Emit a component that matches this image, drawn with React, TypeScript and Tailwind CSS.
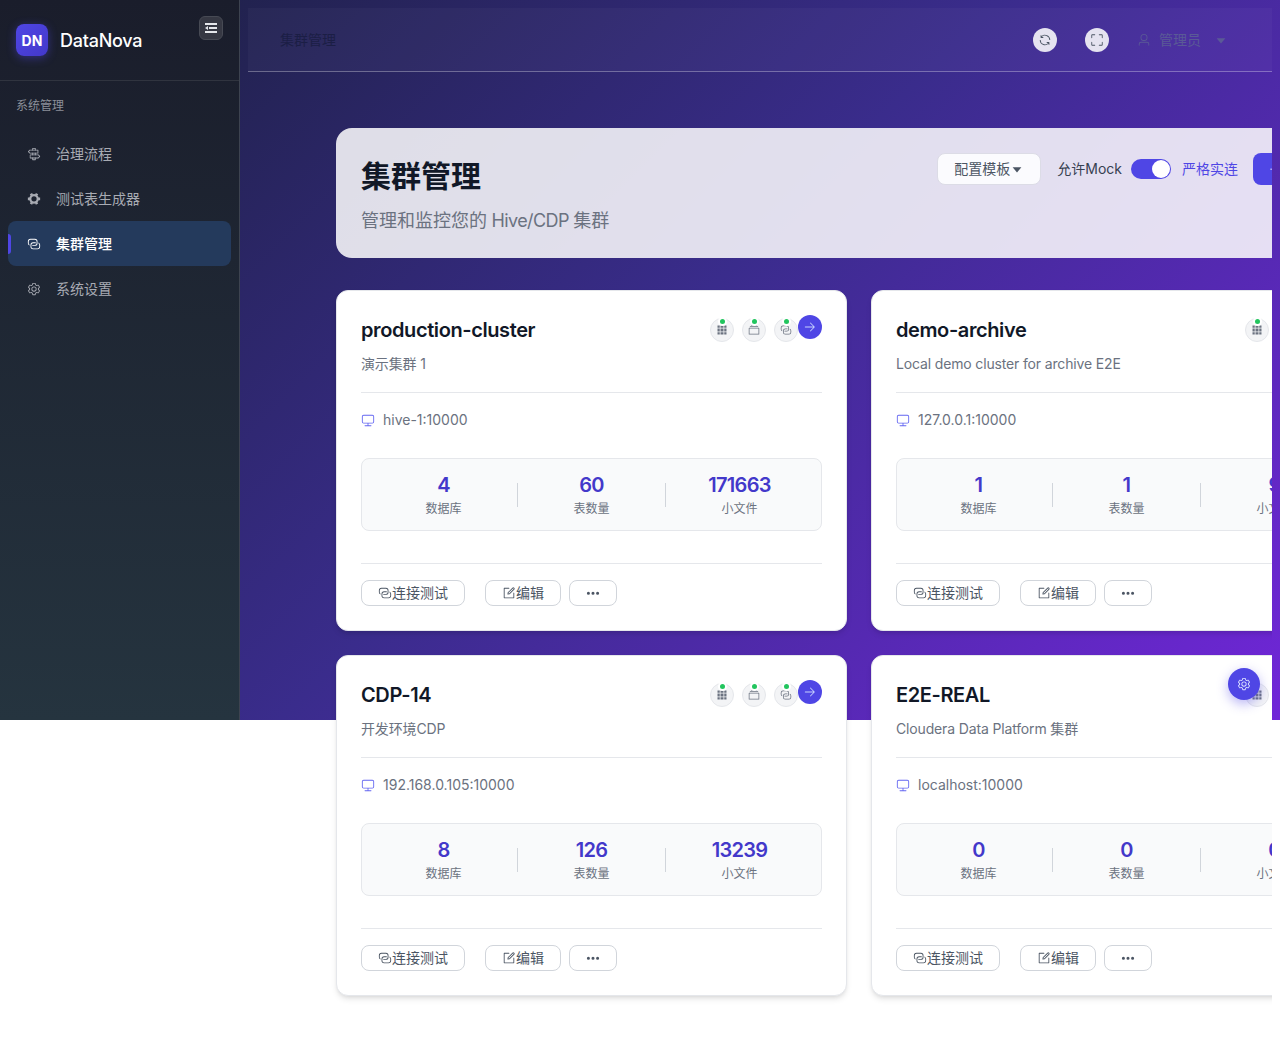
import type { ReactNode } from 'react'

function Icon({ d, className }: { d: string | string[]; className?: string }) {
  const paths = Array.isArray(d) ? d : [d]
  return (
    <svg viewBox="0 0 1024 1024" fill="currentColor" className={className}>
      {paths.map((p, i) => (
        <path key={i} d={p} />
      ))}
    </svg>
  )
}

const icons = {
  connection: [
    'M640 384v64H448a128 128 0 0 0-128 128v128a128 128 0 0 0 128 128h320a128 128 0 0 0 128-128V576a128 128 0 0 0-64-110.848V394.88c74.56 26.368 128 97.472 128 181.056v128a192 192 0 0 1-192 192H448a192 192 0 0 1-192-192V576a192 192 0 0 1 192-192z',
    'M384 640v-64h192a128 128 0 0 0 128-128V320a128 128 0 0 0-128-128H256a128 128 0 0 0-128 128v128a128 128 0 0 0 64 110.848v70.272A192.064 192.064 0 0 1 64 448V320a192 192 0 0 1 192-192h320a192 192 0 0 1 192 192v128a192 192 0 0 1-192 192z',
  ],
  fold: 'M896 192H128v128h768zm0 256H384v128h512zm0 256H128v128h768zM320 384 128 512l192 128z',
  grid: 'M640 384v256H384V384zm64 0h192v256H704zm-64 512H384V704h256zm64 0V704h192v192zm-64-768v192H384V128zm64 0h192v192H704zM320 384v256H128V384zm0 512H128V704h192zm0-768v192H128V128z',
  files: 'M128 384v448h768V384zm-32-64h832a32 32 0 0 1 32 32v512a32 32 0 0 1-32 32H96a32 32 0 0 1-32-32V352a32 32 0 0 1 32-32m64-128h704v64H160zm96-128h512v64H256z',
  monitor: 'M544 768v128h192a32 32 0 1 1 0 64H288a32 32 0 1 1 0-64h192V768H192A128 128 0 0 1 64 640V256a128 128 0 0 1 128-128h640a128 128 0 0 1 128 128v384a128 128 0 0 1-128 128zM192 192a64 64 0 0 0-64 64v384a64 64 0 0 0 64 64h640a64 64 0 0 0 64-64V256a64 64 0 0 0-64-64z',
  setting: 'M600.704 64a32 32 0 0 1 30.464 22.208l35.2 109.376c14.784 7.232 28.928 15.36 42.432 24.512l112.384-24.192a32 32 0 0 1 34.432 15.36L944.32 364.8a32 32 0 0 1-4.032 37.504l-77.12 85.12a357 357 0 0 1 0 49.024l77.12 85.248a32 32 0 0 1 4.032 37.504l-88.704 153.6a32 32 0 0 1-34.432 15.296L708.8 803.904c-13.44 9.088-27.648 17.28-42.368 24.512l-35.264 109.376A32 32 0 0 1 600.704 960H423.296a32 32 0 0 1-30.464-22.208L357.696 828.48a352 352 0 0 1-42.56-24.64l-112.32 24.256a32 32 0 0 1-34.432-15.36L79.68 659.2a32 32 0 0 1 4.032-37.504l77.12-85.248a357 357 0 0 1 0-48.896l-77.12-85.248A32 32 0 0 1 79.68 364.8l88.704-153.6a32 32 0 0 1 34.432-15.296l112.32 24.256c13.568-9.152 27.776-17.408 42.56-24.64l35.2-109.312A32 32 0 0 1 423.232 64H600.64zm-23.424 64H446.72l-36.352 113.088-24.512 11.968a294 294 0 0 0-34.816 20.096l-22.656 15.36-116.224-25.088-65.28 113.152 79.68 88.192-1.92 27.136a293 293 0 0 0 0 40.192l1.92 27.136-79.808 88.192 65.344 113.152 116.224-25.024 22.656 15.296a294 294 0 0 0 34.816 20.096l24.512 11.968L446.72 896h130.688l36.48-113.152 24.448-11.904a288 288 0 0 0 34.752-20.096l22.592-15.296 116.288 25.024 65.28-113.152-79.744-88.192 1.92-27.136a293 293 0 0 0 0-40.256l-1.92-27.136 79.808-88.128-65.344-113.152-116.288 24.96-22.592-15.232a288 288 0 0 0-34.752-20.096l-24.448-11.904L577.344 128zM512 320a192 192 0 1 1 0 384 192 192 0 0 1 0-384m0 64a128 128 0 1 0 0 256 128 128 0 0 0 0-256',
  tools: 'M764.416 254.72a351.7 351.7 0 0 1 86.336 149.184H960v192.064H850.752a351.7 351.7 0 0 1-86.336 149.312l54.72 94.72-166.272 96-54.592-94.72a352.64 352.64 0 0 1-172.48 0L371.136 936l-166.272-96 54.72-94.72a351.7 351.7 0 0 1-86.336-149.312H64v-192h109.248a351.7 351.7 0 0 1 86.336-149.312L204.8 160l166.208-96h.192l54.656 94.592a352.64 352.64 0 0 1 172.48 0L652.8 64h.128L819.2 160l-54.72 94.72zM704 499.968a192 192 0 1 0-384 0 192 192 0 0 0 384 0',
  refresh: 'M771.776 794.88A384 384 0 0 1 128 512h64a320 320 0 0 0 555.712 216.448H654.72a32 32 0 1 1 0-64h149.056a32 32 0 0 1 32 32v148.928a32 32 0 1 1-64 0v-50.56zM276.288 295.616h92.992a32 32 0 0 1 0 64H220.16a32 32 0 0 1-32-32V178.56a32 32 0 0 1 64 0v50.56A384 384 0 0 1 896.128 512h-64a320 320 0 0 0-555.776-216.384z',
  fullScreen: 'M160 96.064l192 .192a32 32 0 0 1 0 64l-192-.192V352a32 32 0 0 1-64 0V160a64 64 0 0 1 64-63.936m704 0a64 64 0 0 1 64 63.936v192a32 32 0 0 1-64 0V160.064l-192 .192a32 32 0 0 1 0-64zM160 927.936a64 64 0 0 1-64-63.936V672a32 32 0 0 1 64 0v192.064l192-.192a32 32 0 0 1 0 64zm704 0l-192-.192a32 32 0 0 1 0-64l192 .192V672a32 32 0 0 1 64 0v192a64 64 0 0 1-64 63.936',
  user: 'M512 512a192 192 0 1 0 0-384 192 192 0 0 0 0 384m0 64a256 256 0 1 1 0-512 256 256 0 0 1 0 512m320 320v-96a96 96 0 0 0-96-96H288a96 96 0 0 0-96 96v96a32 32 0 1 1-64 0v-96a160 160 0 0 1 160-160h448a160 160 0 0 1 160 160v96a32 32 0 1 1-64 0',
  caret: 'm192 384 320 384 320-384z',
  right: 'M754.752 480H160a32 32 0 1 0 0 64h594.752L521.344 777.344a32 32 0 0 0 45.312 45.312l288-288a32 32 0 0 0 0-45.312l-288-288a32 32 0 1 0-45.312 45.312z',
  more: 'M176 416a112 112 0 1 1 0 224 112 112 0 0 1 0-224m336 0a112 112 0 1 1 0 224 112 112 0 0 1 0-224m336 0a112 112 0 1 1 0 224 112 112 0 0 1 0-224',
  edit: [
    'M832 512a32 32 0 1 1 64 0v352a32 32 0 0 1-32 32H160a32 32 0 0 1-32-32V160a32 32 0 0 1 32-32h352a32 32 0 0 1 0 64H192v640h640z',
    'm469.952 554.24 52.8-7.552L847.104 222.4a32 32 0 1 0-45.248-45.248L477.44 501.44l-7.552 52.8zm422.4-422.4a96 96 0 0 1 0 135.808l-331.84 331.84a32 32 0 0 1-18.112 9.088L436.8 623.68a32 32 0 0 1-36.224-36.224l15.104-105.6a32 32 0 0 1 9.024-18.112l331.904-331.84a96 96 0 0 1 135.744 0z',
  ],
  plus: 'M480 480V128a32 32 0 0 1 64 0v352h352a32 32 0 1 1 0 64H544v352a32 32 0 1 1-64 0V544H128a32 32 0 0 1 0-64z',
  guide: [
    'M640 608h-64V416h64zm0 160v160a32 32 0 0 1-32 32H416a32 32 0 0 1-32-32V768h64v128h128V768zM384 608V416h64v192zm256-352h-64V128H448v128h-64V96a32 32 0 0 1 32-32h192a32 32 0 0 1 32 32z',
    'm220.8 256-71.232 80 71.168 80H768V256zm-14.4-64H800a32 32 0 0 1 32 32v224a32 32 0 0 1-32 32H206.4a32 32 0 0 1-23.936-10.752l-99.584-112a32 32 0 0 1 0-42.496l99.584-112A32 32 0 0 1 206.4 192m678.784 496-71.104 80H256V608h557.952zm-57.728-144H234.88a32 32 0 0 0-32 32v224a32 32 0 0 0 32 32h593.6a32 32 0 0 0 23.936-10.752l99.584-112a32 32 0 0 0 0-42.496l-99.584-112A32 32 0 0 0 828.48 544z',
  ],
}

const navItems = [
  { label: '治理流程', icon: icons.guide },
  { label: '测试表生成器', icon: icons.tools },
  { label: '集群管理', icon: icons.connection, active: true },
  { label: '系统设置', icon: icons.setting },
]

const clusters = [
  { name: 'production-cluster', desc: '演示集群 1', host: 'hive-1:10000', dbs: '4', tables: '60', files: '171663', status: true },
  { name: 'demo-archive', desc: 'Local demo cluster for archive E2E', host: '127.0.0.1:10000', dbs: '1', tables: '1', files: '9', status: true },
  { name: 'CDP-14', desc: '开发环境CDP', host: '192.168.0.105:10000', dbs: '8', tables: '126', files: '13239', status: true },
  { name: 'E2E-REAL', desc: 'Cloudera Data Platform 集群', host: 'localhost:10000', dbs: '0', tables: '0', files: '0', status: false },
]

function StatusIcon({ d, dot }: { d: string | string[]; dot: boolean }) {
  return (
    <div className="relative flex h-6 w-6 items-center justify-center rounded-full border border-[#e5e7eb] bg-[#f3f4f6] text-[#6b7280]">
      <Icon d={d} className="h-3 w-3" />
      {dot && (
        <span className="absolute left-[9px] top-[0px] h-[5px] w-[5px] rounded-full bg-[#22c55e] ring-2 ring-white" />
      )}
    </div>
  )
}

function Stat({ value, label }: { value: string; label: string }) {
  return (
    <div className="flex flex-1 flex-col items-center">
      <div className="mt-px text-[20px] font-semibold leading-[24px] tracking-[-0.7px] text-[#4338ca]">{value}</div>
      <div className="mt-[3px] text-[12px] leading-[18px] text-[#6b7280]">{label}</div>
    </div>
  )
}

function CardButton({ children, className }: { children: ReactNode; className: string }) {
  return (
    <button className={`flex h-[26px] items-center justify-center rounded-lg border border-[#d1d5db] bg-white pb-px text-[14px] text-[#4b5563] ${className}`}>
      {children}
    </button>
  )
}

function ClusterCard({ c }: { c: (typeof clusters)[number] }) {
  return (
    <div className="h-[341px] w-[511px] shrink-0 rounded-xl border border-[#e5e7eb] bg-white px-6 shadow-md">
      <div className="flex items-start justify-between pt-[24px]">
        <div className="text-[20px] font-semibold leading-[30px] tracking-[-0.4px] text-[#111827]">{c.name}</div>
        <div className="flex">
          <div className="mt-[3px] flex gap-2">
            <StatusIcon d={icons.grid} dot={c.status} />
            <StatusIcon d={icons.files} dot={c.status} />
            <StatusIcon d={icons.connection} dot={c.status} />
          </div>
          <div className="flex h-6 w-6 items-center justify-center rounded-full bg-[#4f46e5] text-[#c7d2fe]">
            <Icon d={icons.right} className="h-[14px] w-[14px]" />
          </div>
        </div>
      </div>
      <div className="mt-[8px] border-b border-[#e5e7eb] pb-[18px] text-[14px] leading-[21px] tracking-[-0.15px] text-[#6b7280]">{c.desc}</div>
      <div className="mt-[16px] flex h-[21px] items-center text-[14px] text-[#6b7280]">
        <Icon d={icons.monitor} className="mr-2 h-[14px] w-[14px] text-[#6366f1]" />
        {c.host}
      </div>
      <div className="mt-[28px] flex h-[73px] items-center rounded-lg border border-[#e5e7eb] bg-[#f9fafb] px-2">
        <Stat value={c.dbs} label="数据库" />
        <div className="h-6 w-px bg-[#d1d5db]" />
        <Stat value={c.tables} label="表数量" />
        <div className="h-6 w-px bg-[#d1d5db]" />
        <Stat value={c.files} label="小文件" />
      </div>
      <div className="mt-[32px] flex border-t border-[#e5e7eb] pt-[16px]">
        <CardButton className="w-[104px]">
          <Icon d={icons.connection} className="h-[14px] w-[14px]" />
          连接测试
        </CardButton>
        <CardButton className="ml-5 w-[76px]">
          <Icon d={icons.edit} className="h-[14px] w-[14px]" />
          编辑
        </CardButton>
        <CardButton className="ml-2 w-[48px]">
          <Icon d={icons.more} className="h-[14px] w-[14px]" />
        </CardButton>
      </div>
    </div>
  )
}

export default function App() {
  return (
    <div className='relative flex w-full items-start bg-linear-[135deg,#1a1f3c_0%,#3a2c8c_50%,#7026d8_100%] bg-[length:100%_720px] bg-no-repeat pb-[64px] font-[Inter,"Noto_Sans_CJK_SC",sans-serif]'>
      <aside className="h-[720px] w-[240px] shrink-0 border-r border-[#3d4350] bg-linear-to-b from-[#1a1d2b] to-[#25343f]">
        <div className="relative flex h-[81px] items-center border-b border-[#30343f] pl-4">
          <div className="flex h-8 w-8 items-center justify-center rounded-lg bg-linear-to-br from-[#4f46e5] to-[#4338ca] text-[14px] font-bold text-white shadow-[0_2px_10px_rgba(79,70,229,0.45)]">
            DN
          </div>
          <span className="ml-3 text-[18px] font-medium tracking-[-0.25px] text-white">DataNova</span>
          <button className="absolute left-[199px] top-4 flex h-6 w-6 items-center justify-center rounded-md border border-[#474a54] bg-[#363843] text-[#e5e7eb]">
            <Icon d={icons.fold} className="h-4 w-4" />
          </button>
        </div>
        <div className="pl-4 pt-[16px] text-[12px] leading-[18px] text-[#8b8f99]">系统管理</div>
        <nav className="mt-[16px] flex flex-col">
          {navItems.map(item => (
            <div
              key={item.label}
              className={`relative mx-2 flex h-[45px] items-center rounded-lg pl-[19px] text-[14px] ${item.active ? 'bg-[#243a5c] font-medium text-white' : 'text-[#a8abb3]'}`}
            >
              {item.active && <span className="absolute left-0 top-[13px] h-5 w-[3px] rounded-r bg-[#4f46e5]" />}
              <Icon d={item.icon} className="mr-[15px] h-[14px] w-[14px]" />
              {item.label}
            </div>
          ))}
        </nav>
      </aside>

      <main className="min-w-0 flex-1 px-2 pt-2">
        <div className="[clip-path:inset(-100px_0_-800px_0)]">
          <header className="flex h-[64px] items-center border-b border-white/30 bg-white/[0.03] pl-[32px] pr-[44px]">
            <div className="flex-1 text-[14px] text-[#1b1e45]">集群管理</div>
            <div className="flex h-6 w-6 items-center justify-center rounded-full bg-[#e5e3f0] text-[#4b5563]">
              <Icon d={icons.refresh} className="h-[14px] w-[14px]" />
            </div>
            <div className="ml-7 flex h-6 w-6 items-center justify-center rounded-full bg-[#e5e3f0] text-[#4b5563]">
              <Icon d={icons.fullScreen} className="h-[14px] w-[14px]" />
            </div>
            <div className="ml-7 flex items-center text-[14px] text-[#5a5a96]">
              <Icon d={icons.user} className="mr-[8px] h-[14px] w-[14px]" />
              管理员
              <Icon d={icons.caret} className="ml-[13px] h-[14px] w-[14px]" />
            </div>
          </header>

          <div className="ml-[88px] w-[1046px] pt-[56px]">
            <div className="flex h-[130px] items-start justify-between rounded-2xl bg-white/85 pl-[25px] pr-[19px]">
              <div>
                <h1 className="mt-[26px] text-[30px] font-bold leading-[45px] text-[#111827]">集群管理</h1>
                <p className="mt-[8px] text-[18px] leading-[27px] text-[#6b7280]">
                  管理和监控您的<span className="tracking-[-0.6px]"> Hive/CDP </span>集群
                </p>
              </div>
              <div className="mt-[25px] flex items-center">
                <button className="flex h-8 w-[104px] items-center justify-center rounded-lg border border-[#dcdce6] bg-[#fbfbfe] pb-px text-[14px] text-[#4b5563]">
                  配置模板
                  <Icon d={icons.caret} className="h-[14px] w-[14px]" />
                </button>
                <span className="ml-4 pb-[2px] text-[14px] text-[#374151]">允许Mock</span>
                <div className="ml-[9px] flex h-5 w-10 items-center justify-end rounded-full bg-[#4f46e5] pr-[1px]">
                  <span className="h-[18px] w-[18px] rounded-full bg-white" />
                </div>
                <span className="ml-[11px] pb-[2px] text-[14px] text-[#4f46e5]">严格实连</span>
                <button className="ml-[15px] flex h-8 w-[110px] items-center rounded-lg bg-[#4f46e5] pl-4 text-white">
                  <Icon d={icons.plus} className="h-3 w-3" />
                </button>
              </div>
            </div>

            <div className="mt-[32px] grid grid-cols-[511px_511px] gap-6">
              {clusters.map(c => (
                <ClusterCard key={c.name} c={c} />
              ))}
            </div>
          </div>
        </div>
      </main>

      <div className="absolute left-[1228px] top-[668px] flex h-8 w-8 items-center justify-center rounded-full bg-[#4f46e5] text-[#e0e7ff] shadow-[0_4px_12px_rgba(79,70,229,0.4)]">
        <Icon d={icons.setting} className="h-[14px] w-[14px]" />
      </div>
    </div>
  )
}
